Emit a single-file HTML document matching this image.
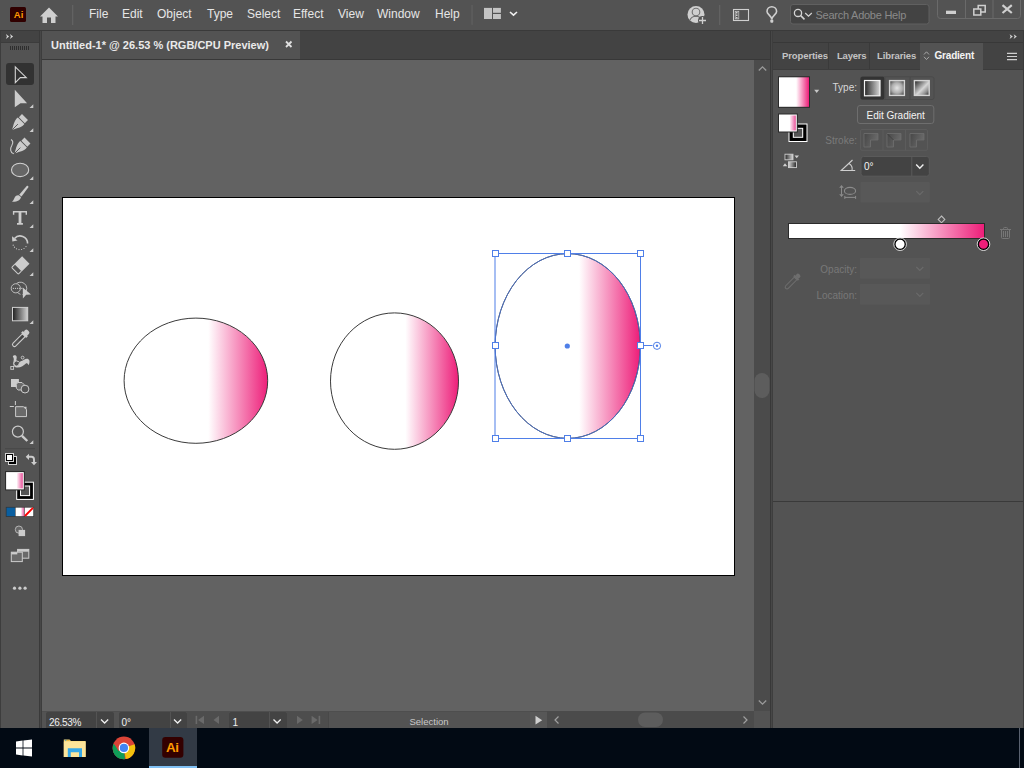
<!DOCTYPE html>
<html><head><meta charset="utf-8">
<style>
*{margin:0;padding:0;box-sizing:border-box}
html,body{width:1024px;height:768px;overflow:hidden;background:#535353;font-family:"Liberation Sans",sans-serif}
.a{position:absolute}
.menu{position:absolute;top:7px;font-size:12px;color:#e6e6e6;line-height:14px}
svg{position:absolute;overflow:visible}
.tb{color:#d8d8d8}
.lbl{position:absolute;font-size:10px;line-height:12px;color:#dcdcdc;text-align:right}
</style></head><body>
<!-- menubar -->
<div class="a" style="left:0;top:0;width:1024px;height:30px;background:#535353"></div>
<div class="a" style="left:0;top:30px;width:1024px;height:1px;background:#3a3a3a"></div>
<!-- Ai logo -->
<div class="a" style="left:10px;top:7px;width:16px;height:15px;background:#300000;border-radius:1.5px"></div>
<div class="a" style="left:13.8px;top:9.4px;font:bold 9.5px/11px 'Liberation Sans';color:#ff9a00;letter-spacing:0px">Ai</div>
<!-- home -->
<svg style="left:0;top:0" width="80" height="30"><path d="M40 16.5 L49 7.6 L58 16.5 L55.5 16.5 L55.5 23 L51 23 L51 17.5 L47 17.5 L47 23 L42.5 23 L42.5 16.5 Z" fill="#cfcfcf"/><rect x="72" y="5" width="1.3" height="20" fill="#626262"/></svg>
<div class="menu" style="left:89px">File</div>
<div class="menu" style="left:122px">Edit</div>
<div class="menu" style="left:157px">Object</div>
<div class="menu" style="left:207px">Type</div>
<div class="menu" style="left:247px">Select</div>
<div class="menu" style="left:293px">Effect</div>
<div class="menu" style="left:338px">View</div>
<div class="menu" style="left:377px">Window</div>
<div class="menu" style="left:435px">Help</div>
<svg style="left:0;top:0" width="1024" height="30">
 <rect x="471.2" y="5" width="1.7" height="19.8" fill="#5d5d5d"/>
 <rect x="484" y="7.9" width="8" height="11.1" fill="#c4c4c4"/><rect x="493" y="7.9" width="7.9" height="4.9" fill="#c4c4c4"/><rect x="493" y="14" width="7.9" height="5" fill="#c4c4c4"/>
 <path d="M510 12 L513.5 15.2 L517 12" stroke="#f0f0f0" stroke-width="1.6" fill="none"/>
 <!-- user -->
 <circle cx="696" cy="14.5" r="8.5" fill="#cfcfcf"/>
 <circle cx="696" cy="12" r="3.8" fill="#cfcfcf" stroke="#707070" stroke-width="1.1"/>
 <path d="M689.8 20.5 Q691 16.5 696 16.3 Q701 16.5 702.2 20.5" fill="none" stroke="#707070" stroke-width="1.1"/>
 <circle cx="702.5" cy="20.5" r="4.5" fill="#535353"/>
 <path d="M702.5 17v7M699 20.5h7" stroke="#cfcfcf" stroke-width="1.3"/>
 <rect x="719" y="5" width="1.3" height="20" fill="#626262"/>
 <rect x="733.5" y="9.5" width="15" height="11" fill="none" stroke="#cfcfcf" stroke-width="1.1"/>
 <rect x="735.2" y="11.3" width="3.6" height="7.6" fill="none" stroke="#cfcfcf" stroke-width="0.7"/><rect x="736" y="12" width="1.5" height="1.5" fill="#cfcfcf"/><rect x="736" y="14.5" width="1.5" height="1.5" fill="#cfcfcf"/><rect x="736" y="17" width="1.5" height="1.5" fill="#cfcfcf"/>
 <!-- bulb -->
 <path d="M771.8 19.5 C771.8 16 767 14.5 767 11.5 A4.8 4.8 0 0 1 776.6 11.5 C776.6 14.5 771.8 16 771.8 19.5 Z" fill="none" stroke="#cfcfcf" stroke-width="1.6"/>
 <rect x="770.3" y="19.5" width="3" height="3.2" rx="1" fill="#cfcfcf"/>
 <!-- search -->
 <rect x="790.5" y="4.5" width="138.5" height="19.5" rx="2.5" fill="#434343" stroke="#606060"/>
 <circle cx="798" cy="12.9" r="3.6" fill="none" stroke="#d4d4d4" stroke-width="1.3"/>
 <path d="M800.7 15.6 L804.5 19.4" stroke="#d4d4d4" stroke-width="1.5"/>
 <path d="M805.2 13 L808.5 16.2 L811.8 13" stroke="#d4d4d4" stroke-width="1.2" fill="none"/>
 <!-- window buttons -->
 <path d="M937.5 0 V15.5 Q937.5 18.5 940.5 18.5 H1017.5 Q1020.5 18.5 1020.5 15.5 V0" fill="none" stroke="#6a6a6a" stroke-width="1"/>
 <rect x="965" y="0" width="1" height="18" fill="#6a6a6a"/><rect x="992.5" y="0" width="1" height="18" fill="#6a6a6a"/>
 <rect x="946" y="10.7" width="10" height="3.3" fill="#cfcfcf"/>
 <rect x="978.2" y="5.5" width="7" height="6.5" fill="none" stroke="#cfcfcf" stroke-width="1.5"/>
 <rect x="973.8" y="9" width="7" height="6" fill="#535353" stroke="#cfcfcf" stroke-width="1.5"/>
 <path d="M1002.5 5.2 L1011.8 13 M1011.8 5.2 L1002.5 13" stroke="#cfcfcf" stroke-width="2.2"/>
</svg>
<div class="a" style="left:815.5px;top:9px;font-size:11px;line-height:13px;color:#8a8a8a;letter-spacing:-0.25px">Search Adobe Help</div>

<!-- document tab bar -->
<div class="a" style="left:41px;top:31px;width:731px;height:28px;background:#434343"></div>
<div class="a" style="left:42px;top:31px;width:258px;height:28px;background:#535353"></div>
<div class="a" style="left:51px;top:39px;font:bold 11px/13px 'Liberation Sans';color:#eaeaea">Untitled-1* @ 26.53 % (RGB/CPU Preview)</div>
<svg style="left:0;top:0" width="300" height="60"><path d="M286 41.5 L291.5 47 M291.5 41.5 L286 47" stroke="#e0e0e0" stroke-width="1.8"/></svg>
<div class="a" style="left:41px;top:59px;width:731px;height:1px;background:#383838"></div>

<!-- canvas -->
<div class="a" style="left:42px;top:60px;width:712px;height:651px;background:#626262"></div>
<!-- vertical scrollbar -->
<div class="a" style="left:754px;top:60px;width:16px;height:651px;background:#4b4b4b"></div>
<svg style="left:0;top:0" width="1024" height="768">
 <path d="M758.8 70.5 L762.5 66.8 L766.2 70.5" stroke="#9a9a9a" stroke-width="1.3" fill="none"/>
 <rect x="754.5" y="373" width="15" height="25" rx="7.5" fill="#5d5d5d"/>
 <path d="M758.8 700.5 L762.5 704.2 L766.2 700.5" stroke="#9a9a9a" stroke-width="1.3" fill="none"/>
</svg>
<div class="a" style="left:770px;top:31px;width:3px;height:697px;background:#474747;border-left:1px solid #383838;border-right:1px solid #3e3e3e"></div>

<!-- toolbar -->
<div class="a" style="left:0;top:31px;width:1px;height:697px;background:#3d3d3d"></div>
<div class="a" style="left:1px;top:31px;width:38px;height:12px;background:#434343"></div>
<div class="a" style="left:39px;top:31px;width:3px;height:697px;background:#474747;border-left:1px solid #3a3a3a;border-right:1px solid #3d3d3d"></div>


<!-- toolbar icons -->
<svg style="left:0;top:0" width="42" height="620">
 <defs><linearGradient id="gg" x1="0" x2="1"><stop offset="0" stop-color="#1e1e1e"/><stop offset="1" stop-color="#d2d2d2"/></linearGradient>
 <linearGradient id="pk" x1="0" x2="1"><stop offset="0" stop-color="#fff"/><stop offset="0.6" stop-color="#fff"/><stop offset="1" stop-color="#e9529a"/></linearGradient></defs>
 <path d="M5.9 34 L9.1 36.5 L5.9 39 L6.9 36.5 Z M9.9 34 L13.1 36.5 L9.9 39 L10.9 36.5 Z" fill="#d8d8d8"/>
 <rect x="1" y="42" width="38" height="1" fill="#3c3c3c"/>
 <g fill="#2e2e2e"><rect x="10" y="46" width="1" height="4"/><rect x="12" y="46" width="1" height="4"/><rect x="14" y="46" width="1" height="4"/><rect x="16" y="46" width="1" height="4"/><rect x="18" y="46" width="1" height="4"/><rect x="20" y="46" width="1" height="4"/><rect x="22" y="46" width="1" height="4"/><rect x="24" y="46" width="1" height="4"/><rect x="26" y="46" width="1" height="4"/><rect x="28" y="46" width="1" height="4"/></g>
 <rect x="6" y="63" width="28" height="22" rx="3" fill="#323232"/>
 <path d="M15.3 66.8 L26.3 77.6 L20.3 77.6 L15.3 82.6 Z" fill="none" stroke="#d4d4d4" stroke-width="1.1" stroke-linejoin="miter"/>
 <g fill="#cccccc">
 <path d="M14.8 89.8 L27.1 103.3 L20.5 103.3 L14.8 107.3 Z"/>
 <path d="M29.5 108 L33.3 108 L33.3 104.2 Z M29.5 132 L33.3 132 L33.3 128.2 Z M29.5 180 L33.3 180 L33.3 176.2 Z M29.5 204 L33.3 204 L33.3 200.2 Z M29.5 228 L33.3 228 L33.3 224.2 Z M29.5 252 L33.3 252 L33.3 248.2 Z M29.5 276 L33.3 276 L33.3 272.2 Z M29.5 324 L33.3 324 L33.3 320.2 Z M29.5 444 L33.3 444 L33.3 440.2 Z"/>
 </g>
 <!-- pen -->
 <g transform="translate(20,122) rotate(45)">
  <path d="M-4.2 -7 L4.2 -7 L4.2 -2.6 L-4.2 -2.6 Z" fill="#cccccc"/>
  <path d="M-4.6 -1.6 L4.6 -1.6 C5.4 2 3 6 0 11 C-3 6 -5.4 2 -4.6 -1.6 Z" fill="#cccccc"/>
  <path d="M0 3 L0 11" stroke="#535353" stroke-width="0.9"/>
 </g>
 <!-- curvature pen -->
 <g transform="translate(22.5,145.5) rotate(45)">
  <path d="M-4.2 -7 L4.2 -7 L4.2 -2.6 L-4.2 -2.6 Z" fill="#cccccc"/>
  <path d="M-4.6 -1.6 L4.6 -1.6 C5.4 2 3 6 0 11 C-3 6 -5.4 2 -4.6 -1.6 Z" fill="#cccccc"/>
  <path d="M0 3 L0 11" stroke="#535353" stroke-width="0.9"/>
 </g>
 <path d="M11 139.5 C13.5 141 13.2 143 11.8 145.5 C10 148.5 10 152.5 13.8 153.8" fill="none" stroke="#cccccc" stroke-width="1.1"/>
 <!-- ellipse -->
 <ellipse cx="20.1" cy="169.9" rx="8.6" ry="6.7" fill="#666" stroke="#d0d0d0" stroke-width="1.1"/>
 <!-- brush -->
 <path d="M26.5 186.2 C27.8 185.2 28.8 186 28.2 187.5 L21.5 196.5 L19.2 194.8 Z" fill="#cccccc"/>
 <path d="M18.6 195.2 L21 197 C20.5 200 17.5 202 12 201.8 C14 200.5 14.2 197.5 15.5 196.3 C16.5 195.4 17.6 195 18.6 195.2 Z" fill="#cccccc"/>
 <!-- type -->
 <path d="M12.9 211 H27 V214.8 H25.6 V212.6 H21.4 V223 H22.9 V224.8 H17 V223 H18.6 V212.6 H14.3 V214.8 H12.9 Z" fill="#cccccc"/>
 <!-- rotate -->
 <path d="M14.5 238.5 A7.5 7.5 0 0 1 27.6 243.5" fill="none" stroke="#cccccc" stroke-width="1.6"/>
 <path d="M12 236.2 L17.5 240.5 L12.3 241.5 Z" fill="#cccccc"/>
 <g fill="#cccccc"><circle cx="13.2" cy="245.2" r="0.6"/><circle cx="14.5" cy="247.2" r="0.6"/><circle cx="16.5" cy="248.8" r="0.6"/><circle cx="19" cy="249.6" r="0.6"/><circle cx="21.6" cy="249.5" r="0.6"/><circle cx="24" cy="248.5" r="0.6"/><circle cx="26" cy="246.6" r="0.6"/></g>
 <!-- eraser -->
 <g transform="translate(20.5,265.3) rotate(45)">
  <rect x="-5.2" y="-7.5" width="10.4" height="10.6" fill="#cccccc"/>
  <rect x="-4.7" y="3" width="9.4" height="4.8" rx="0.8" fill="none" stroke="#cccccc" stroke-width="1"/>
 </g>
 <!-- shape builder -->
 <circle cx="15.8" cy="288.3" r="4.6" fill="none" stroke="#bdbdbd" stroke-width="1"/>
 <path d="M16.6 283.4 A6.4 6.4 0 1 1 22.5 294.6" fill="none" stroke="#bdbdbd" stroke-width="1"/>
 <path d="M20.5 294.3 A6.4 6.4 0 0 1 17 292" fill="none" stroke="#bdbdbd" stroke-width="1"/>
 <g fill="#d0d0d0"><circle cx="13.4" cy="288.3" r="0.65"/><circle cx="15.5" cy="288.3" r="0.65"/><circle cx="17.6" cy="288.3" r="0.65"/><circle cx="19.7" cy="288.3" r="0.65"/><circle cx="21.8" cy="288.3" r="0.65"/></g>
 <path d="M22.8 287.5 L31 294.6 L26.2 294.8 L22.9 298.4 Z" fill="#cccccc"/>
 <!-- gradient -->
 <rect x="12.5" y="307.4" width="15.2" height="13.4" fill="url(#gg)" stroke="#d0d0d0" stroke-width="1"/>
 <!-- eyedropper -->
 <g transform="translate(20.5,338.5) rotate(45)">
  <rect x="-2.7" y="-11" width="5.4" height="4.5" rx="2" fill="#cccccc"/>
  <rect x="-3.6" y="-7" width="7.2" height="2.6" fill="#cccccc"/>
  <path d="M-2 -4.5 L2 -4.5 L2 8.5 A2 2 0 0 1 -2 8.5 Z" fill="#535353" stroke="#cccccc" stroke-width="1.1"/>
  <rect x="-1" y="-4" width="2" height="6" fill="#444"/>
 </g>
 <!-- puppet warp -->
 <path d="M12.8 356.5 C13.5 354.8 16 354.8 16.6 356.6 C17 358 16.2 359.5 16.4 361 C18.5 362 21.5 361.5 24 359.8 C26 358.5 28.5 358.3 29.4 360.5 C29.8 362 29.3 364 28.5 365.3 C28 363.8 27.3 362.8 26.2 363.3 C24 365.5 21 367.5 17.5 367.6 C14.5 367.6 12.8 365.5 13.3 362.5 C13.6 360.5 14.5 358.5 12.8 356.5 Z" fill="#cccccc"/>
 <circle cx="16.5" cy="363.5" r="2.6" fill="#535353" stroke="#cccccc" stroke-width="1"/>
 <path d="M17 364 L22.5 359" stroke="#535353" stroke-width="1"/>
 <circle cx="22.6" cy="357.6" r="1.4" fill="#535353" stroke="#cccccc" stroke-width="0.9"/>
 <rect x="10.8" y="366.5" width="2.8" height="2.8" fill="#535353" stroke="#cccccc" stroke-width="0.9"/>
 <!-- live paint / shape -->
 <rect x="11" y="379" width="7.9" height="8" fill="#cccccc"/>
 <path d="M17.8 382.5 H22 L24 384.5 V388.3 L22 390 H18.2 L16.3 388.2 V384.3 Z" fill="#6a6a6a" stroke="#cccccc" stroke-width="1"/>
 <circle cx="25" cy="389.1" r="3.9" fill="#535353" stroke="#cccccc" stroke-width="1"/>
 <!-- artboard -->
 <path d="M15.4 401 V405 M9.8 406.5 H13.9" stroke="#cccccc" stroke-width="1"/>
 <path d="M15.6 406.7 H23.5 L26.5 409.7 V416.6 H15.6 Z" fill="#6a6a6a" stroke="#cccccc" stroke-width="1"/>
 <path d="M23.5 406.7 L26.5 406.7 L26.5 409.7 Z" fill="#cccccc"/>
 <!-- zoom -->
 <circle cx="17.9" cy="431.6" r="5.5" fill="none" stroke="#cccccc" stroke-width="1.2"/>
 <path d="M22 435.8 L27.3 441" stroke="#cccccc" stroke-width="2.4"/>
 <rect x="5" y="448.2" width="30" height="1" fill="#474747"/>
 <!-- default fill stroke -->
 <rect x="8" y="456" width="9" height="9" fill="#d4d4d4"/><rect x="9" y="457" width="7" height="7" fill="#000"/>
 <path d="M11 461.5 H13.5 V459" fill="none" stroke="#d4d4d4" stroke-width="1"/>
 <rect x="5" y="453" width="9" height="9" fill="#d4d4d4"/><rect x="6" y="454" width="7" height="7" fill="#000"/><rect x="7" y="455" width="5" height="5" fill="#fff"/>
 <!-- swap arrows -->
 <path d="M28 456.8 H31.5 Q34 456.8 34 459.5 V462.5" fill="none" stroke="#cccccc" stroke-width="1.9"/>
 <path d="M25.7 456.8 L29 453.7 L29 460 Z M31 462 L37 462 L34 465.2 Z" fill="#cccccc"/>
 <!-- big fill / stroke -->
 <rect x="16.2" y="481.7" width="17.7" height="18.2" fill="#fff"/>
 <rect x="17.2" y="482.7" width="15.7" height="16.2" fill="#000"/>
 <rect x="20" y="485.5" width="10.1" height="10.6" fill="#fff"/>
 <rect x="21" y="486.5" width="8.1" height="8.6" fill="#555"/>
 <rect x="5.1" y="471.1" width="19.7" height="19.3" fill="#2a2a2a"/>
 <rect x="6.1" y="472.1" width="17.7" height="17.3" fill="#fff"/><rect x="7.1" y="473.1" width="15.7" height="15.3" fill="url(#pk)"/>
 <!-- color modes -->
 <rect x="5.8" y="506.9" width="28.3" height="10" fill="#333"/>
 <rect x="6.5" y="507.6" width="8.6" height="8.6" fill="#0a5fa0"/>
 <rect x="15.6" y="507.6" width="8.6" height="8.6" fill="url(#pk)"/>
 <rect x="24.7" y="507.6" width="8.6" height="8.6" fill="#fff"/>
 <path d="M25 516 L33 507.8" stroke="#f00" stroke-width="1.8"/>
 <!-- draw modes -->
 <circle cx="18.9" cy="529.6" r="3.6" fill="#666" stroke="#bdbdbd" stroke-width="0.9"/>
 <rect x="18.6" y="529.9" width="6.5" height="6.2" fill="#cccccc"/>
 <!-- screen mode -->
 <rect x="17.6" y="549.4" width="11.2" height="8.8" fill="#6a6a6a" stroke="#cccccc" stroke-width="1"/>
 <rect x="17.6" y="549.4" width="11.2" height="2.3" fill="#cccccc"/>
 <rect x="11.3" y="552.2" width="11" height="9.4" fill="#6a6a6a" stroke="#cccccc" stroke-width="1"/>
 <rect x="11.3" y="552.2" width="6" height="2.2" fill="#cccccc"/>
 <g fill="#cccccc"><circle cx="14.5" cy="588.2" r="1.6"/><circle cx="19.9" cy="588.2" r="1.6"/><circle cx="25.1" cy="588.2" r="1.6"/></g>
</svg>

<!-- artboard -->
<div class="a" style="left:62px;top:197px;width:673px;height:379px;background:#fff;border:1px solid #000"></div>


<!-- artwork -->
<svg style="left:0;top:0" width="1024" height="768">
 <defs>
  <linearGradient id="e1" gradientUnits="userSpaceOnUse" x1="124" x2="268" y1="0" y2="0"><stop offset="0" stop-color="#fff"/><stop offset="0.585" stop-color="#fff"/><stop offset="1" stop-color="#ED1E79"/></linearGradient>
  <linearGradient id="e2" gradientUnits="userSpaceOnUse" x1="330.5" x2="458.5" y1="0" y2="0"><stop offset="0" stop-color="#fff"/><stop offset="0.585" stop-color="#fff"/><stop offset="1" stop-color="#ED1E79"/></linearGradient>
  <linearGradient id="e3" gradientUnits="userSpaceOnUse" x1="495" x2="640" y1="0" y2="0"><stop offset="0" stop-color="#fff"/><stop offset="0.58" stop-color="#fff"/><stop offset="1" stop-color="#ED1E79"/></linearGradient>
 </defs>
 <ellipse cx="195.9" cy="380.7" rx="71.8" ry="62.6" fill="url(#e1)" stroke="#3a3a3a" stroke-width="1"/>
 <ellipse cx="394.5" cy="381.1" rx="64" ry="68.2" fill="url(#e2)" stroke="#3a3a3a" stroke-width="1"/>
 <ellipse cx="567.75" cy="346" rx="72.6" ry="92.4" fill="url(#e3)" stroke="#2a2a2a" stroke-width="1"/>
 <ellipse cx="567.75" cy="346" rx="72.6" ry="92.4" fill="none" stroke="#4f7fe8" stroke-width="0.8"/>
 <rect x="495" y="253.5" width="145.5" height="185" fill="none" stroke="#4f7fe8" stroke-width="1"/>
 <g fill="#fff" stroke="#4f7fe8" stroke-width="1">
  <rect x="492.5" y="250.5" width="6" height="6"/><rect x="564.5" y="250.5" width="6" height="6"/><rect x="637.5" y="250.5" width="6" height="6"/>
  <rect x="492.5" y="342.5" width="6" height="6"/><rect x="637.5" y="342.5" width="6" height="6"/>
  <rect x="492.5" y="435.5" width="6" height="6"/><rect x="564.5" y="435.5" width="6" height="6"/><rect x="637.5" y="435.5" width="6" height="6"/>
 </g>
 <circle cx="567.3" cy="346" r="2.6" fill="#4f7fe8"/>
 <path d="M643.5 345.5 H652.5" stroke="#4f7fe8" stroke-width="1"/>
 <circle cx="657" cy="345.8" r="3.6" fill="#fff" stroke="#4f7fe8" stroke-width="1"/>
 <circle cx="657" cy="345.8" r="1.2" fill="#4f7fe8"/>
</svg>

<!-- status bar -->
<div class="a" style="left:42px;top:711px;width:728px;height:17px;background:#535353"></div>
<div class="a" style="left:42px;top:711px;width:712px;height:1px;background:#4e4e4e"></div>
<div class="a" style="left:46px;top:712px;width:50px;height:16px;background:#434343;border-radius:2px 0 0 0"></div>
<div class="a" style="left:97px;top:712px;width:17px;height:16px;background:#434343;border-radius:0 2px 0 0"></div>
<div class="a" style="left:119px;top:712px;width:51px;height:16px;background:#434343;border-radius:2px 0 0 0"></div>
<div class="a" style="left:171px;top:712px;width:16px;height:16px;background:#434343;border-radius:0 2px 0 0"></div>
<div class="a" style="left:187px;top:712px;width:42px;height:16px;background:#4d4d4d"></div>
<div class="a" style="left:229px;top:712px;width:40px;height:16px;background:#434343;border-radius:2px 0 0 0"></div>
<div class="a" style="left:270px;top:712px;width:17px;height:16px;background:#434343;border-radius:0 2px 0 0"></div>
<div class="a" style="left:287px;top:712px;width:41px;height:16px;background:#4d4d4d"></div>
<div class="a" style="left:328px;top:712px;width:1px;height:16px;background:#484848"></div>
<div class="a" style="left:530px;top:712px;width:17px;height:16px;background:#575757"></div>
<div class="a" style="left:547px;top:711px;width:207px;height:17px;background:#4b4b4b"></div>
<div class="a" style="left:49px;top:716.7px;font-size:10px;line-height:12px;color:#f0f0f0;letter-spacing:-0.3px">26.53%</div>
<div class="a" style="left:121.5px;top:716.7px;font-size:10px;line-height:12px;color:#f0f0f0">0°</div>
<div class="a" style="left:232.5px;top:716.7px;font-size:10px;line-height:12px;color:#f0f0f0">1</div>
<div class="a" style="left:409.5px;top:716px;font-size:9.5px;line-height:12px;color:#c8c8c8">Selection</div>
<svg style="left:0;top:0" width="1024" height="768">
 <g fill="none" stroke="#f0f0f0" stroke-width="1.3">
  <path d="M101 719.5 L104.6 723 L108.2 719.5"/><path d="M174 719.5 L177.6 723 L181.2 719.5"/><path d="M273.5 719.5 L277.1 723 L280.7 719.5"/>
 </g>
 <g fill="#6a6a6a">
  <rect x="195.6" y="715.8" width="1.6" height="8.2"/><path d="M204 715.8 V724 L198 719.9 Z"/>
  <path d="M219 715.8 V724 L213.5 719.9 Z"/>
  <path d="M297 715.8 V724 L302.8 719.9 Z"/>
  <path d="M311.6 715.8 V724 L317.6 719.9 Z"/><rect x="318.6" y="715.8" width="1.6" height="8.2"/>
 </g>
 <path d="M535.5 715.8 V724.6 L542.2 720.2 Z" fill="#d0d0d0"/>
 <path d="M558.5 716.5 L555 720 L558.5 723.5 M743.5 716.5 L747 720 L743.5 723.5" fill="none" stroke="#a0a0a0" stroke-width="1.2"/>
 <rect x="638" y="712.5" width="25" height="14.5" rx="7.2" fill="#5d5d5d"/>
</svg>

<!-- right panel -->
<div class="a" style="left:773px;top:31px;width:251px;height:11px;background:#434343"></div>
<div class="a" style="left:773px;top:42px;width:251px;height:1px;background:#383838"></div>
<div class="a" style="left:773px;top:43px;width:251px;height:26px;background:#434343"></div>
<div class="a" style="left:773px;top:69px;width:251px;height:659px;background:#535353"></div>
<div class="a" style="left:920px;top:43px;width:63px;height:26px;background:#535353"></div>
<div class="a" style="left:773px;top:69px;width:147px;height:1px;background:#3c3c3c"></div>
<div class="a" style="left:983px;top:69px;width:41px;height:1px;background:#3c3c3c"></div>
<div class="a" style="left:828px;top:43px;width:1px;height:26px;background:#3a3a3a"></div>
<div class="a" style="left:868.5px;top:43px;width:1px;height:26px;background:#3a3a3a"></div>
<div class="a" style="left:782px;top:48.5px;width:46px;height:13px;overflow:hidden;font:bold 9.5px/13px 'Liberation Sans';color:#c4c4c4;letter-spacing:-0.1px;white-space:nowrap">Properties</div>
<div class="a" style="left:837px;top:48.5px;font:bold 9.5px/13px 'Liberation Sans';color:#c4c4c4;letter-spacing:-0.2px">Layers</div>
<div class="a" style="left:877px;top:48.5px;font:bold 9.5px/13px 'Liberation Sans';color:#c4c4c4;letter-spacing:-0.1px">Libraries</div>
<div class="a" style="left:934.5px;top:48.5px;font:bold 10px/13px 'Liberation Sans';color:#f4f4f4;letter-spacing:-0.2px">Gradient</div>
<svg style="left:0;top:0" width="1024" height="320">
 <defs>
  <linearGradient id="pg" x1="0" x2="1"><stop offset="0" stop-color="#fff"/><stop offset="0.57" stop-color="#fff"/><stop offset="1" stop-color="#ED1E79"/></linearGradient>
  <linearGradient id="lg" x1="0" x2="1"><stop offset="0" stop-color="#262626"/><stop offset="1" stop-color="#d8d8d8"/></linearGradient>
  <radialGradient id="rg" r="0.72"><stop offset="0" stop-color="#e4e4e4"/><stop offset="0.5" stop-color="#acacac"/><stop offset="1" stop-color="#262626"/></radialGradient>
  <linearGradient id="fg" x1="0" y1="0" x2="1" y2="1"><stop offset="0" stop-color="#1e1e1e"/><stop offset="0.3" stop-color="#808080"/><stop offset="0.55" stop-color="#d6d6d6"/><stop offset="0.78" stop-color="#909090"/><stop offset="1" stop-color="#262626"/></linearGradient>
  <linearGradient id="dg" x1="0" y1="0" x2="1" y2="0.3"><stop offset="0" stop-color="#474747"/><stop offset="1" stop-color="#6a6a6a"/></linearGradient>
 </defs>
 <!-- header >> -->
 <path d="M1009.6 34.2 L1012.8 36.6 L1009.6 39 L1010.6 36.6 Z M1013.6 34.2 L1016.8 36.6 L1013.6 39 L1014.6 36.6 Z" fill="#d8d8d8"/>
 <!-- tab up/down icon -->
 <path d="M924 54.5 L926.5 51.8 L929 54.5 M924 56.8 L926.5 59.5 L929 56.8" fill="none" stroke="#a8a8a8" stroke-width="1"/>
 <!-- hamburger -->
 <path d="M1007 53.3 H1017 M1007 56.5 H1017 M1007 59.6 H1017" stroke="#d0d0d0" stroke-width="1.2"/>
 <!-- big swatch -->
 <rect x="778" y="76.3" width="32" height="31.5" fill="#2a2a2a"/>
 <rect x="779" y="77.3" width="30" height="29.5" fill="url(#pg)"/>
 <path d="M814.2 89.7 H819.2 L816.7 93 Z" fill="#c8c8c8"/>
 <!-- small fill/stroke -->
 <rect x="788.5" y="123.5" width="19" height="18.5" fill="#fff"/>
 <rect x="789.5" y="124.5" width="17" height="16.5" fill="#000"/>
 <rect x="792.8" y="127.8" width="10.4" height="10" fill="#fff"/>
 <rect x="793.8" y="128.8" width="8.4" height="8" fill="#555"/>
 <rect x="778" y="113.5" width="19.8" height="19" fill="#2a2a2a"/>
 <rect x="779" y="114.5" width="17.8" height="17" fill="#fff"/><rect x="780" y="115.5" width="15.8" height="15" fill="url(#pk)"/>
 <!-- swap gradient icon -->
 <rect x="785" y="154.2" width="8" height="5.6" fill="url(#lg)" stroke="#cfcfcf" stroke-width="0.9"/>
 <path d="M794.5 155.5 H799 L796.7 158.3 Z" fill="#cfcfcf"/>
 <rect x="788.5" y="161.8" width="8" height="5.8" fill="url(#lg)" stroke="#cfcfcf" stroke-width="0.9" transform="rotate(180 792.5 164.7)"/>
 <path d="M782.8 166.3 H787.3 L785 163.2 Z" fill="#cfcfcf"/>
 <!-- type buttons -->
 <rect x="860.5" y="76.8" width="73.5" height="22.7" rx="2" fill="#535353" stroke="#4a4a4a" stroke-width="1"/>
 <rect x="860.5" y="76.8" width="24" height="22.7" rx="2" fill="#333333"/>
 <rect x="884.5" y="77" width="1" height="22.5" fill="#4a4a4a"/>
 <rect x="909.6" y="77" width="1" height="22.5" fill="#4a4a4a"/>
 <rect x="864.5" y="80.5" width="15.5" height="15.3" fill="url(#lg)" stroke="#f4f4f4" stroke-width="1.2"/>
 <rect x="889.6" y="80.6" width="14.8" height="14.8" fill="url(#rg)" stroke="#d4d4d4" stroke-width="1.4"/>
 <rect x="914.4" y="80.6" width="14.8" height="14.8" fill="url(#fg)" stroke="#d4d4d4" stroke-width="1.4"/>
 <!-- edit gradient button -->
 <rect x="857.5" y="105.5" width="76.3" height="18" rx="2.5" fill="#535353" stroke="#6e6e6e" stroke-width="1"/>
 <!-- stroke buttons -->
 <rect x="860.5" y="129.5" width="67" height="20.8" rx="1.5" fill="none" stroke="#5c5c5c" stroke-width="1"/>
 <rect x="882.5" y="129.5" width="1" height="20.8" fill="#5c5c5c"/><rect x="905" y="129.5" width="1" height="20.8" fill="#5c5c5c"/>
 <path d="M864 147 V133.5 H878 V140 H870.5 V147 Z" fill="url(#dg)" stroke="#6c6c6c" stroke-width="0.9"/>
 <path d="M887 147 V133.5 H901 V140 H893.5 V147 Z" fill="url(#dg)" stroke="#6c6c6c" stroke-width="0.9"/>
 <path d="M887.3 133.8 L893.5 140" stroke="#3e3e3e" stroke-width="0.9"/>
 <path d="M910 147 V133.5 H924 V140 H916.5 V147 Z" fill="url(#dg)" stroke="#6c6c6c" stroke-width="0.9"/>
 <!-- angle icon -->
 <path d="M852.5 160 L841.2 170.5 H855.2" fill="none" stroke="#cfcfcf" stroke-width="1.1"/>
 <path d="M849 163.5 A6.5 6.5 0 0 1 852 170.5" fill="none" stroke="#cfcfcf" stroke-width="1.1"/>
 <!-- angle input -->
 <rect x="861" y="156.5" width="68.3" height="19.7" rx="2.5" fill="#434343" stroke="#5a5a5a" stroke-width="1"/>
 <rect x="911.3" y="157" width="1" height="19" fill="#5a5a5a"/>
 <path d="M916.2 164.5 L919.8 168.3 L923.4 164.5" fill="none" stroke="#f0f0f0" stroke-width="1.4"/>
 <!-- aspect icon -->
 <path d="M841.5 187 V194.5" fill="none" stroke="#8c8c8c" stroke-width="1"/>
 <path d="M839.2 187.7 L841.5 184.9 L843.8 187.7 Z M839.2 194.2 L841.5 197 L843.8 194.2 Z" fill="#8c8c8c"/>
 <ellipse cx="850" cy="190.9" rx="5.6" ry="3.5" fill="none" stroke="#8c8c8c" stroke-width="1.1"/>
 <path d="M844.8 197.4 H855.6 M844.8 195.9 V198.9 M855.6 195.9 V198.9" fill="none" stroke="#8c8c8c" stroke-width="1"/>
 <rect x="860.4" y="182" width="69.5" height="20.6" rx="1" fill="#585858"/>
 <path d="M916.3 191.2 L919.8 194.7 L923.3 191.2" fill="none" stroke="#6a6a6a" stroke-width="1.2"/>
 <!-- gradient slider -->
 <path d="M941.5 216 L944.8 219.4 L941.5 222.8 L938.2 219.4 Z" fill="none" stroke="#bdbdbd" stroke-width="1.1"/>
 <rect x="788" y="223" width="197" height="16" fill="#2b2b2b"/>
 <rect x="789" y="224" width="195" height="14" fill="url(#pg)"/>
 <circle cx="900.1" cy="244.2" r="5.3" fill="#fff" stroke="#000" stroke-width="1.6"/>
 <circle cx="900.1" cy="244.2" r="6.3" fill="none" stroke="#e8e8e8" stroke-width="0.9"/>
 <circle cx="983.5" cy="244.2" r="5.3" fill="#ED1E79" stroke="#000" stroke-width="1.6"/>
 <circle cx="983.5" cy="244.2" r="6.3" fill="none" stroke="#e8e8e8" stroke-width="0.9"/>
 <!-- trash -->
 <path d="M1000 229.5 H1011 M1003.5 229.5 V228.5 Q1003.5 227.5 1004.5 227.5 H1006.5 Q1007.5 227.5 1007.5 228.5 V229.5" fill="none" stroke="#777" stroke-width="1"/>
 <path d="M1001.5 229.5 V237.5 Q1001.5 238.5 1002.5 238.5 H1008.5 Q1009.5 238.5 1009.5 237.5 V229.5 M1003.5 231 V237 M1005.5 231 V237 M1007.5 231 V237" fill="none" stroke="#777" stroke-width="1"/>
 <!-- eyedropper -->
 <g transform="translate(792.5,281.5) rotate(45)">
  <rect x="-2.4" y="-10" width="4.8" height="4" rx="2" fill="#6e6e6e"/>
  <rect x="-3.2" y="-6.5" width="6.4" height="2.2" fill="#6e6e6e"/>
  <path d="M-1.8 -4.3 L1.8 -4.3 L1.8 7.8 A1.8 1.8 0 0 1 -1.8 7.8 Z" fill="none" stroke="#6e6e6e" stroke-width="1"/>
 </g>
 <!-- opacity / location inputs -->
 <rect x="860" y="258" width="70" height="20.7" rx="1" fill="#585858"/>
 <rect x="860" y="284" width="70" height="20.7" rx="1" fill="#585858"/>
 <path d="M916.3 267 L919.8 270.5 L923.3 267 M916.3 292.8 L919.8 296.3 L923.3 292.8" fill="none" stroke="#6a6a6a" stroke-width="1.2"/>
</svg>
<div class="lbl" style="left:800px;top:82px;width:57px;color:#d8d8d8">Type:</div>
<div class="a" style="left:866.5px;top:110.3px;font-size:10px;line-height:12px;color:#f4f4f4">Edit Gradient</div>
<div class="lbl" style="left:800px;top:135px;width:57px;color:#7a7a7a">Stroke:</div>
<div class="a" style="left:864px;top:161px;font-size:10px;line-height:12px;color:#f4f4f4">0°</div>
<div class="lbl" style="left:790px;top:264px;width:67px;color:#787878">Opacity:</div>
<div class="lbl" style="left:790px;top:290px;width:67px;color:#787878">Location:</div>


<div class="a" style="left:1023px;top:31px;width:1px;height:697px;background:#3a3a3a"></div>
<div class="a" style="left:773px;top:501px;width:250px;height:1px;background:#3a3a3a"></div>
<!-- taskbar -->
<div class="a" style="left:0;top:728px;width:1024px;height:40px;background:#020a14"></div>
<div class="a" style="left:149px;top:728px;width:48px;height:40px;background:#323a45"></div>
<div class="a" style="left:149px;top:766px;width:48px;height:2px;background:#80c0f4"></div>
<div class="a" style="left:1019px;top:728px;width:1px;height:40px;background:#5a6270"></div>
<svg style="left:0;top:0" width="1024" height="768">
 <!-- windows logo -->
 <path d="M16 741.5 L22.6 740.6 V747.6 H16 Z M23.4 740.5 L32 739.4 V747.6 H23.4 Z M16 748.4 H22.6 V755.4 L16 754.5 Z M23.4 748.4 H32 V756.6 L23.4 755.5 Z" fill="#ffffff"/>
 <!-- folder -->
 <path d="M63.8 739.5 H69.5 L71 741 H85.6 V757 H63.8 Z" fill="#f7d77a"/>
 <rect x="63.8" y="741.5" width="21.8" height="15.5" fill="#fde59a"/>
 <path d="M64.5 740 H69.2 L70.2 741 H64.5 Z" fill="#e9b940"/>
 <rect x="65" y="739.8" width="1.2" height="1" fill="#3fa8e0"/>
 <path d="M67.8 757 V748.3 H82 V757 H79 V752.3 H70.8 V757 Z" fill="#37a9e8"/>
 <!-- chrome -->
 <circle cx="123.9" cy="747.9" r="11.3" fill="#db4437"/>
 <path d="M123.9 747.9 L113.3 744 A11.3 11.3 0 0 0 119 758.1 Z" fill="#0f9d58"/>
 <path d="M123.9 747.9 L113.6 752.4 A11.3 11.3 0 0 0 123.9 759.2 A11.3 11.3 0 0 0 125 759.2 Z" fill="#0f9d58"/>
 <path d="M123.9 747.9 L134.6 744.2 A11.3 11.3 0 0 1 125.8 759 Z" fill="#f4c20d"/>
 <path d="M113.3 742.5 L118.5 751 L123.9 747.9 Z" fill="#db4437"/>
 <circle cx="123.9" cy="747.9" r="5.3" fill="#fff"/>
 <circle cx="123.9" cy="747.9" r="4.1" fill="#4285f4"/>
 <!-- ai -->
 <rect x="162.2" y="737" width="21.2" height="20.8" rx="3.2" fill="#330000"/>
</svg>
<div class="a" style="left:166px;top:740.7px;font:bold 13.5px/13px 'Liberation Sans';color:#ff9a00;letter-spacing:-0.4px">Ai</div>
</body></html>
